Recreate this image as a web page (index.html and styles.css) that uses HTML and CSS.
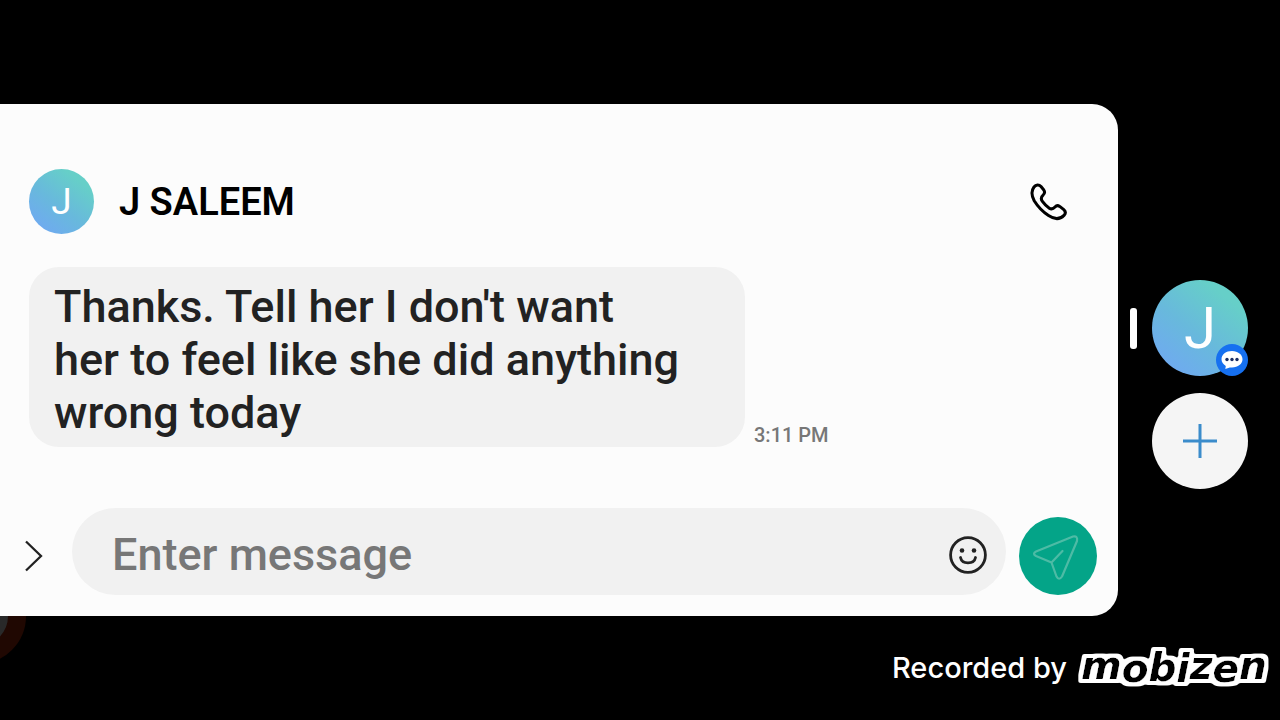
FILE: index.html
```html
<!DOCTYPE html>
<html lang="en">
<head>
<meta charset="utf-8">
<meta name="viewport" content="width=device-width, initial-scale=1">
<title>J SALEEM</title>
<link rel="stylesheet" href="styles.css">
</head>
<body>
<div class="stage">
  <div class="record-dot" aria-hidden="true"></div>
  <main class="card">
    <header class="contact">
      <span class="avatar avatar-small">J</span>
      <h1 class="name">J SALEEM</h1>
      <button class="icon-button call" type="button" aria-label="Call">
        <svg width="40" height="40" viewBox="0 0 40 40" fill="none" stroke="#000" stroke-width="3" stroke-linejoin="round">
          <path d="M6 5C8 2.300 11 2.300 13 4.500L15.800 8C17 9.800 16.800 11.300 15.300 12.800C12.800 15 12.700 17 14.400 19.400C16.300 22 18.800 24.500 21.300 26.200C23.300 27.500 25 27.200 27 25C28.400 23.400 30 23.300 31.700 24.400L35.800 27.600C37.800 29.400 37.800 31.400 36 33.400C31.600 37.900 26.500 37.600 20.500 33.600C15.500 30.300 9.800 24.600 6.200 18.800C3 12.800 3 9 6 5Z"/>
        </svg>
      </button>
    </header>
    <section class="thread">
      <p class="bubble">Thanks. Tell her I don't want her to feel like she did anything wrong today</p>
      <time class="time">3:11 PM</time>
    </section>
    <form class="composer">
      <button class="icon-button expand" type="button" aria-label="More options">
        <svg width="20" height="32" viewBox="0 0 20 32" fill="none" stroke="#222" stroke-width="2.300"><path d="M2 1.500L17 16L2 30.500"/></svg>
      </button>
      <div class="field">
        <input class="message" type="text" placeholder="Enter message" aria-label="Enter message">
        <button class="icon-button" type="button" aria-label="Emoji">
          <svg width="40" height="40" viewBox="0 0 40 40" fill="none" stroke="#222" stroke-width="2.800" stroke-linecap="round">
            <circle cx="20" cy="20" r="17.400"/>
            <circle cx="14" cy="15.500" r="2.300" fill="#222" stroke="none"/><circle cx="26" cy="15.500" r="2.300" fill="#222" stroke="none"/>
            <path d="M12.500 22.500C14 29.700 26 29.700 27.500 22.500"/>
          </svg>
        </button>
      </div>
      <button class="send" type="submit" aria-label="Send">
        <svg width="78" height="78" viewBox="0 0 78 78" fill="none" stroke="#4dbba5" stroke-width="2.200" stroke-linejoin="round" stroke-linecap="round">
          <path d="M54 19.500L17 34.500Q13 36.500 17 39L32.500 45.500L37.500 59.500Q40 64 43 59.500L58 24Q59 18.500 54 19.500ZM32.500 45.500L43.500 34"/>
        </svg>
      </button>
    </form>
  </main>
  <nav class="rail" aria-label="Conversations">
    <div class="head">
      <span class="marker"></span>
      <button class="avatar avatar-large" type="button" aria-label="J SALEEM">J
        <svg class="badge" width="32" height="32" viewBox="0 0 32 32">
          <circle cx="16" cy="16" r="16" fill="#1670f0"/>
          <path d="M16 7c-6 0-10.500 3.500-10.500 8.300 0 3 1.700 5 4.300 6.700l-.5 3 4.500-1.500h2.200c6 0 10.500-3.500 10.500-8.200s-4.500-8.300-10.500-8.300z" fill="#fff"/>
          <g fill="#1b2f66"><circle cx="11" cy="15.500" r="1.700"/><circle cx="16" cy="15.500" r="1.700"/><circle cx="21" cy="15.500" r="1.700"/></g>
        </svg>
      </button>
    </div>
    <button class="add" type="button" aria-label="New conversation">
      <svg width="36" height="36" viewBox="0 0 36 36" fill="none" stroke="#3b8ccb" stroke-width="3"><path d="M18 1V35M1 18H35"/></svg>
    </button>
  </nav>
</div>
<footer class="credit">
  <span>Recorded by</span>
  <svg class="logo" width="204" height="48" viewBox="0 0 204 48" role="img" aria-label="mobizen">
    <filter id="outline" x="-10%" y="-20%" width="120%" height="140%">
      <feMorphology in="SourceAlpha" operator="dilate" radius="4" result="wide"/>
      <feGaussianBlur in="wide" stdDeviation="1" result="soft"/>
      <feComponentTransfer in="soft" result="edge"><feFuncA type="linear" slope="3" intercept="-1"/></feComponentTransfer>
      <feFlood flood-color="#fff"/>
      <feComposite in2="edge" operator="in" result="halo"/>
      <feMerge><feMergeNode in="halo"/><feMergeNode in="SourceGraphic"/></feMerge>
    </filter>
    <text x="6" y="35" filter="url(#outline)">m<tspan dy="3">o</tspan><tspan dy="-1">b</tspan><tspan dy="1">i</tspan><tspan dy="-3">z</tspan><tspan dy="3">e</tspan><tspan dy="-3">n</tspan></text>
  </svg>
</footer>
</body>
</html>
```
FILE: styles.css
```css
* { box-sizing: border-box; }
body {
  margin: 0;
  min-height: 100vh;
  padding-top: 104px;
  background: #000;
  font-family: Roboto, "Liberation Sans", sans-serif;
  font-weight: 500;
  overflow-x: hidden;
}
button { border: 0; padding: 0; font: inherit; cursor: pointer; }
svg { display: block; }
.stage { position: relative; display: flex; align-items: stretch; }
.record-dot {
  position: absolute;
  left: -70px;
  bottom: -48px;
  width: 96px;
  height: 96px;
  border: 18px solid #200802;
  border-radius: 50%;
  background: #292929;
}
.card {
  position: relative;
  flex: 1;
  min-width: 0;
  margin-left: -24px;
  padding: 65px 21px 21px 53px;
  border-radius: 26px;
  background: #fcfcfc;
}
.contact { display: flex; align-items: center; }
.avatar {
  display: flex;
  align-items: center;
  justify-content: center;
  border-radius: 50%;
  background: linear-gradient(38deg, #6faaf0 12%, #68b9dc 45%, #66cfc8 80%);
  color: #fff;
}
.avatar-small { width: 65px; height: 65px; font-size: 37px; font-weight: 400; }
.avatar-large { position: relative; width: 96px; height: 96px; font-size: 58px; font-weight: 400; }
.name { flex: 1; margin: 0 0 0 25px; font-size: 38px; line-height: 44px; font-weight: 600; color: #000; }
.icon-button { background: none; }
.call { margin-right: 29px; }
.thread { display: flex; align-items: flex-end; gap: 9px; margin-top: 33px; }
.bubble {
  max-width: 716px;
  margin: 0;
  padding: 13px 60px 8px 25px;
  border-radius: 30px;
  background: #f1f1f1;
  color: #222;
  font-size: 45px;
  line-height: 53px;
}
.time { font-size: 20px; line-height: 24px; color: #777; white-space: nowrap; }
.composer { display: flex; align-items: flex-end; margin-top: 61px; }
.expand { width: 20px; margin: 0 28px 23px -5px; }
.field {
  flex: 1;
  display: flex;
  align-items: center;
  height: 87px;
  padding: 7px 18px 0 40px;
  margin-right: 13px;
  border-radius: 44px;
  background: #f1f1f1;
}
.message {
  flex: 1;
  min-width: 0;
  padding: 0 0 2px;
  border: 0;
  outline: 0;
  background: none;
  font: inherit;
  font-size: 45px;
  color: #222;
}
.message::placeholder { color: #777; opacity: 1; }
.send { border-radius: 50%; background: #04a488; }
.rail { display: flex; flex-direction: column; align-items: flex-end; gap: 17px; padding: 176px 32px 0 12px; }
.head { display: flex; align-items: center; gap: 15px; }
.marker { width: 7px; height: 41px; border-radius: 3px; background: #fff; }
.badge { position: absolute; right: 0; bottom: 0; }
.add {
  display: flex;
  align-items: center;
  justify-content: center;
  width: 96px;
  height: 96px;
  border-radius: 50%;
  background: #f5f5f5;
}
.credit {
  display: flex;
  align-items: center;
  justify-content: flex-end;
  gap: 8px;
  padding: 28px 1px 0 0;
  color: #fff;
  font-family: Inter, sans-serif;
  font-size: 29px;
  line-height: 36px;
}
.logo text {
  font-family: "DejaVu Sans", sans-serif;
  font-size: 39px;
  font-weight: 700;
  font-style: italic;
  fill: #000;
}
```
